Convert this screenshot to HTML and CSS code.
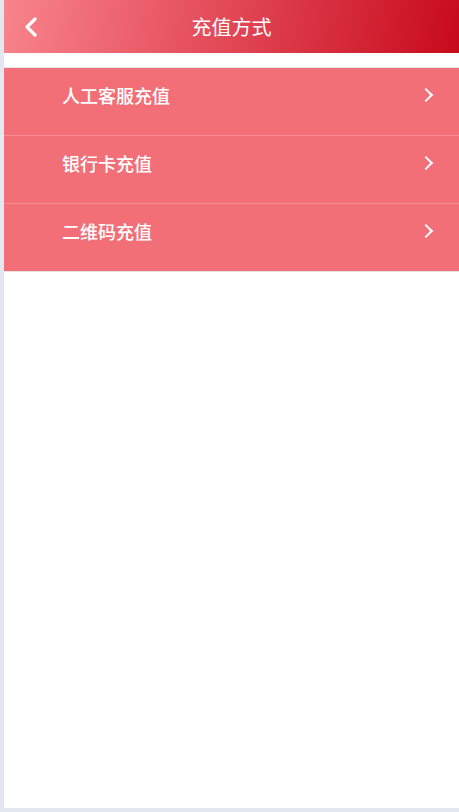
FILE: index.html
```html
<!DOCTYPE html>
<html lang="zh-CN">
<head>
  <meta charset="UTF-8" />
  <meta name="viewport" content="width=device-width, initial-scale=1.0"/>
  <title>充值方式</title>
  <link rel="stylesheet" href="styles.css">
</head>
<body>
  <div class="page">
    <header class="topbar">
      <a class="back" href="#">
        <svg width="14" height="20" viewBox="0 0 14 20">
          <path d="M11 2 L3 10 L11 18" fill="none" stroke="#fff" stroke-width="3.2" stroke-linecap="round" stroke-linejoin="round"/>
        </svg>
      </a>
      <h1>充值方式</h1>
    </header>

    <ul class="pay-list">
      <li class="pay-item"><span>人工客服充值</span><i class="arrow"></i></li>
      <li class="pay-item"><span>银行卡充值</span><i class="arrow"></i></li>
      <li class="pay-item"><span>二维码充值</span><i class="arrow"></i></li>
    </ul>
  </div>
</body>
</html>
```

FILE: styles.css
```css
:root {
  --bg-side: #e3e8f0;
  --row: #f26f78;
  --row-line: #f98d93;
}

body {
  margin: 0;
  background: var(--bg-side);
  font-family: "Noto Sans CJK SC", "Noto Sans", sans-serif;
  color: #fff;
}

.page {
  margin-left: 4px;
  height: 808px;
  background: #fff;
}

.topbar {
  height: 53px;
  display: flex;
  align-items: center;
  justify-content: center;
  position: relative;
  background: linear-gradient(100deg, #f8848c 0%, #e44d5b 45%, #c70a1c 100%);
}

.topbar h1 {
  margin: 0;
  font-size: 20px;
  font-weight: normal;
}

.back {
  position: absolute;
  left: 20px;
  top: 17px;
  line-height: 0;
}

.pay-list {
  list-style: none;
  margin: 14px 0 0;
  padding: 0;
  border-top: 1px solid #e6e6e6;
}

.pay-item {
  height: 68px;
  box-sizing: border-box;
  display: flex;
  align-items: center;
  justify-content: space-between;
  padding: 15px 28px 29px 58px;
  line-height: 24px;
  background: var(--row);
  border-bottom: 1px solid var(--row-line);
  font-size: 18px;
  font-weight: 500;
}

.pay-item:last-child {
  border-bottom-color: #e3e3e3;
}

.arrow {
  width: 8px;
  height: 8px;
  border-top: 2px solid #fff;
  border-right: 2px solid #fff;
  transform: rotate(45deg);
}
```
